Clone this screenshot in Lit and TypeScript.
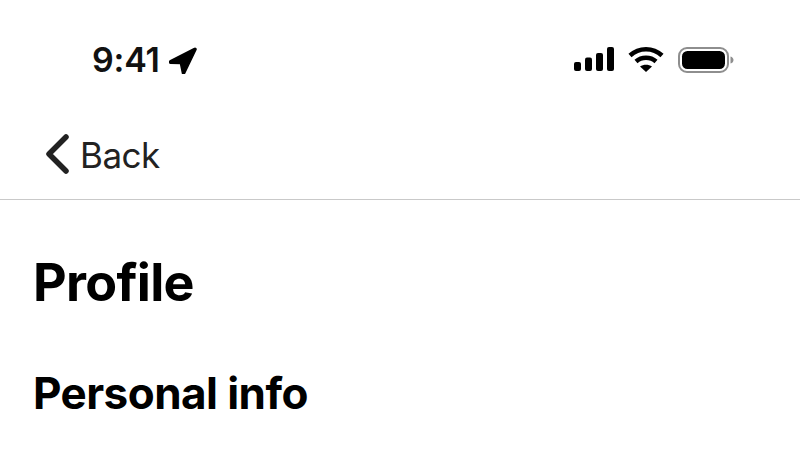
import { LitElement, html, css } from "lit";
import { customElement } from "lit/decorators.js";

@customElement("app-root")
export class AppRoot extends LitElement {
  static styles = css`
    :host { display: block; width: 800px; height: 450px; background: #fff; overflow: hidden; font-family: Inter, "Liberation Sans", sans-serif; color: #000; }
    .status { height: 119px; box-sizing: border-box; padding: 41px 66px 0 92px; display: flex; justify-content: space-between; align-items: flex-start; }
    .left { display: flex; align-items: center; gap: 9px; height: 38px; }
    .time { font-size: 34px; font-weight: 600; line-height: 38px; letter-spacing: -0.2px; color: #111; }
    .right { display: flex; align-items: center; gap: 14px; height: 38px; }
    svg { display: block; }
    .nav { height: 81px; box-sizing: border-box; border-bottom: 1px solid #c9c9c9; padding: 14px 0 0 45px; display: flex; align-items: flex-start; gap: 9px; }
    .back { font-size: 35px; line-height: 44px; font-weight: 400; color: #222; letter-spacing: -0.5px; }
    .content { padding: 57px 0 0 33px; }
    h1 { margin: 0; font-size: 52px; line-height: 52px; font-weight: 700; letter-spacing: -0.7px; }
    h2 { margin: 61px 0 0; font-size: 44px; line-height: 46px; font-weight: 700; letter-spacing: -0.55px; }
  `;
  render() {
    return html`
      <div class="status">
        <div class="left">
          <span class="time">9:41</span>
          <svg width="28" height="28" viewBox="0 0 28 28"><path d="M1 15 25.500 2.500a1 1 0 0 1 1.400 1.300L15.500 27.500c-.5 1-1.800.8-2-.2L11.500 17.500 1.500 17.300C.5 17.200.3 15.500 1 15Z" fill="#000" stroke="#000" stroke-width="1.500" stroke-linejoin="round"/></svg>
        </div>
        <div class="right">
          <svg width="40" height="26" viewBox="0 0 40 26">
            <rect x="0" y="15" width="7" height="9" rx="2"/><rect x="11" y="10.500" width="7" height="13.500" rx="2"/><rect x="22" y="6" width="7" height="18" rx="2"/><rect x="33" y="0" width="7" height="24" rx="2"/>
          </svg>
          <svg width="36" height="28" viewBox="0 0 36 28" fill="none" stroke="#000" stroke-width="4.500">
            <path d="M2 9.500C11 1 25 1 34 9.500"/><path d="M8 15.500C13.500 10.500 22.500 10.500 28 15.500"/><path d="M12 20.500 18 26 24 20.500C20.500 18 15.500 18 12 20.500Z" fill="#000" stroke="none"/>
          </svg>
          <svg width="56" height="28" viewBox="0 0 56 28">
            <rect x="1" y="2" width="49" height="24" rx="8" fill="none" stroke="#8e8e8e" stroke-width="2"/>
            <rect x="4" y="5" width="43" height="18" rx="5.500" fill="#000"/>
            <path d="M52.500 10.500c2 .5 3 2 3 3.500s-1 3-3 3.500Z" fill="#8e8e8e"/>
          </svg>
        </div>
      </div>
      <div class="nav">
        <svg width="26" height="42" viewBox="0 0 26 42" fill="none" stroke="#222" stroke-width="5.500" stroke-linecap="round" stroke-linejoin="round"><path d="M21 4 4 21 21 38"/></svg>
        <span class="back">Back</span>
      </div>
      <div class="content">
        <h1>Profile</h1>
        <h2>Personal info</h2>
      </div>
    `;
  }
}
